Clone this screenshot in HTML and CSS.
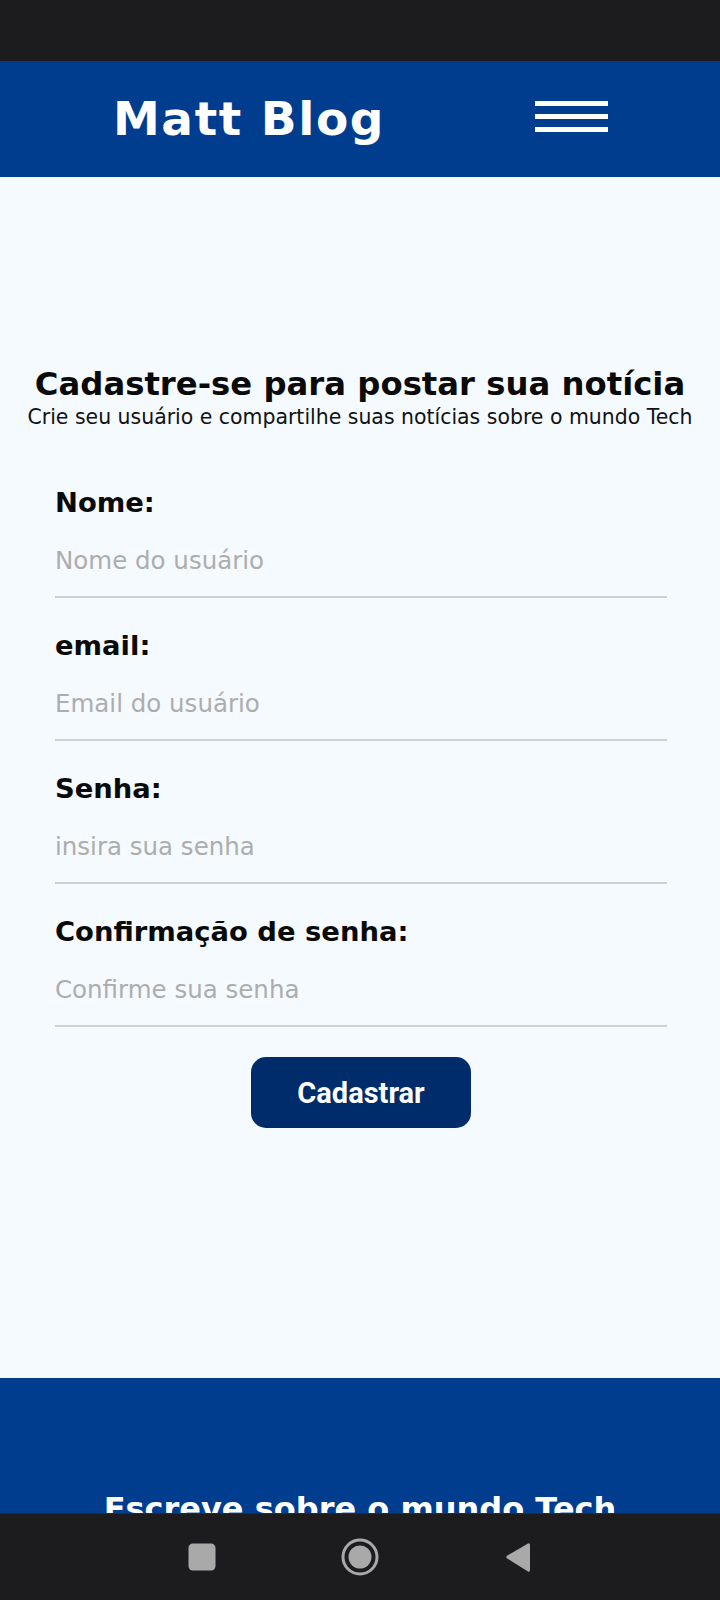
FILE: index.html
```html
<!DOCTYPE html>
<html lang="pt-BR">
<head>
<meta charset="utf-8">
<title>Matt Blog - Cadastro</title>
<link rel="stylesheet" href="styles.css">
</head>
<body>
<div class="status-bar"></div>
<header class="site-header">
  <h1 class="brand">Matt Blog</h1>
  <button class="menu-toggle" aria-label="Menu">
    <span class="menu-line"></span>
    <span class="menu-line"></span>
    <span class="menu-line"></span>
  </button>
</header>
<main class="signup">
  <h2 class="signup-title">Cadastre-se para postar sua notícia</h2>
  <p class="signup-subtitle">Crie seu usuário e compartilhe suas notícias sobre o mundo Tech</p>
  <form class="signup-form">
    <div class="field">
      <label class="field-label" for="nome">Nome:</label>
      <input class="field-input" id="nome" type="text" placeholder="Nome do usuário">
    </div>
    <div class="field">
      <label class="field-label" for="email">email:</label>
      <input class="field-input" id="email" type="email" placeholder="Email do usuário">
    </div>
    <div class="field">
      <label class="field-label" for="senha">Senha:</label>
      <input class="field-input" id="senha" type="password" placeholder="insira sua senha">
    </div>
    <div class="field">
      <label class="field-label" for="confirma">Confirmação de senha:</label>
      <input class="field-input" id="confirma" type="password" placeholder="Confirme sua senha">
    </div>
    <button class="submit-btn" type="submit">Cadastrar</button>
  </form>
</main>
<footer class="site-footer">
  <p class="footer-text">Escreve sobre o mundo Tech</p>
</footer>
<nav class="system-nav">
  <svg class="nav-icon" viewBox="0 0 40 40" width="40" height="40"><rect x="6.5" y="6.5" width="27" height="27" rx="4.5" fill="#a9a9a9"/></svg>
  <svg class="nav-icon" viewBox="0 0 40 40" width="40" height="40"><circle cx="20" cy="20" r="17" fill="none" stroke="#a9a9a9" stroke-width="3"/><circle cx="20" cy="20" r="11.5" fill="#a9a9a9"/></svg>
  <svg class="nav-icon" viewBox="0 0 40 40" width="40" height="40"><path d="M30 6.5 Q32 5.5 32 8 L32 33 Q32 35.5 30 34.5 L9 21.3 Q7.5 20 9 18.7 Z" fill="#a9a9a9"/></svg>
</nav>
</body>
</html>
```

FILE: styles.css
```css
* {
  box-sizing: border-box;
}

html, body {
  margin: 0;
  padding: 0;
}

body {
  background: #f5faff;
  font-family: "DejaVu Sans", sans-serif;
  color: #0a0a0a;
}

.status-bar {
  height: 61px;
  background: #1c1c1e;
}

.site-header {
  height: 116px;
  background: #003d8f;
  display: flex;
  align-items: center;
  justify-content: space-between;
  padding: 0 112px 0 113px;
}

.brand {
  margin: 0;
  color: #ffffff;
  font-family: "DejaVu Sans", sans-serif;
  font-weight: 700;
  font-size: 47px;
  line-height: 54px;
  letter-spacing: 1.6px;
}

.menu-toggle {
  display: flex;
  flex-direction: column;
  gap: 8px;
  width: 73px;
  padding: 0;
  margin: 0 0 6px 0;
  border: none;
  background: transparent;
}

.menu-line {
  display: block;
  height: 5px;
  width: 100%;
  background: #ffffff;
}

.signup {
  padding: 188px 0 250px;
}

.signup-title {
  margin: 0;
  text-align: center;
  font-size: 32.3px;
  line-height: 38px;
  font-weight: 700;
  color: #0a0a0a;
}

.signup-subtitle {
  margin: 2px 0 0;
  text-align: center;
  font-size: 20.45px;
  line-height: 24px;
  font-weight: 400;
  color: #111;
}

.signup-form {
  margin: 59px 53px 0 55px;
  display: flex;
  flex-direction: column;
  gap: 33px;
}

.field {
  display: flex;
  flex-direction: column;
  gap: 12px;
}

.field-label {
  font-size: 27.4px;
  line-height: 30px;
  font-weight: 700;
  color: #0a0a0a;
}

.field-input {
  box-sizing: content-box;
  display: block;
  width: 100%;
  height: 30px;
  padding: 16px 0 20px;
  margin: 0;
  border: none;
  border-bottom: 2px solid #cdd1d6;
  background: transparent;
  font-family: "DejaVu Sans", sans-serif;
  font-size: 24.5px;
  line-height: 30px;
  font-weight: 400;
  color: #222;
  outline: none;
}

.field-input::placeholder {
  color: #adadad;
  font-weight: 400;
}

.submit-btn {
  align-self: center;
  margin-top: -3px;
  width: 220px;
  height: 71px;
  border: none;
  border-radius: 15px;
  background: #012c6b;
  color: #ffffff;
  font-family: Roboto, sans-serif;
  font-weight: 700;
  font-size: 29px;
  line-height: 34px;
  padding: 0;
}

.site-footer {
  background: #003d8f;
  min-height: 320px;
  padding: 112px 0 0;
}

.footer-text {
  margin: 0;
  text-align: center;
  color: #ffffff;
  font-size: 32px;
  line-height: 38px;
  font-weight: 700;
}

.system-nav {
  position: fixed;
  left: 0;
  right: 0;
  bottom: 0;
  height: 87px;
  background: #1c1c1e;
  border-top: 1px solid #2a2a2e;
  display: flex;
  align-items: center;
  justify-content: center;
  gap: 118px;
}

.nav-icon {
  display: block;
}
```
